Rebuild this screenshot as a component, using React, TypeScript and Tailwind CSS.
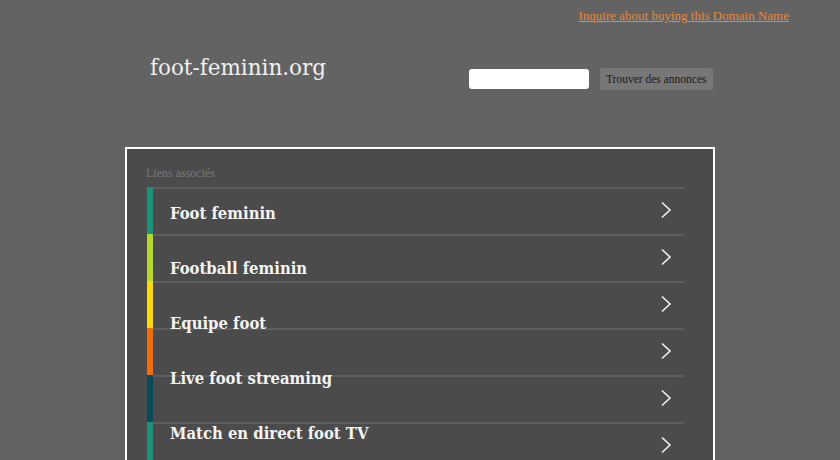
import React from 'react';

interface LinkRow {
  label: string;
  bar: string;
  pad: string;
}

const rows: LinkRow[] = [
  { label: 'Foot feminin', bar: 'bg-[#1a9479]', pad: 'pt-[13px]' },
  { label: 'Football feminin', bar: 'bg-[#b6d62a]', pad: 'pt-[21px]' },
  { label: 'Equipe foot', bar: 'bg-[#fbd90a]', pad: 'pt-[29px]' },
  { label: 'Live foot streaming', bar: 'bg-[#f26c0a]', pad: 'pt-[37px]' },
  { label: 'Match en direct foot TV', bar: 'bg-[#084a5a]', pad: 'pt-[45px]' },
  { label: '', bar: 'bg-[#1d9278]', pad: 'pt-[53px]' },
];

function Chevron() {
  return (
    <svg width="12" height="18" viewBox="0 0 12 18" fill="none" className="shrink-0">
      <path d="M2 1.5 L10 9 L2 16.5" stroke="#f2f2f2" strokeWidth="1.6" />
    </svg>
  );
}

export default function App() {
  return (
    <div
      className="w-[840px] h-[460px] overflow-hidden bg-[#636363] relative"
      style={{ fontFamily: '"DejaVu Serif", "Liberation Serif", serif' }}
    >
      {/* top link */}
      <div className="flex justify-end pr-[51px] pt-[8px] h-[40px]">
        <a
          href="#"
          className="text-[#e8883a] underline text-[13px] leading-[16px]"
          style={{ fontFamily: '"Liberation Serif", serif' }}
        >
          Inquire about buying this Domain Name
        </a>
      </div>

      {/* header */}
      <div className="flex items-start h-[107px]">
        <div className="pl-[150px] pt-[13px] text-[21.5px] leading-[30px] text-[#f0f0f0] w-[469px]">
          foot-feminin.org
        </div>
        <div className="flex items-center gap-[11px] pt-[28px]">
          <div className="w-[120px] h-[20px] bg-white rounded-[3px]" />
          <button
            className="h-[22px] px-[6px] bg-[#777777] rounded-[3px] text-[#1a1a1a] text-[11.5px] leading-[22px]"
            style={{ fontFamily: '"Liberation Serif", serif' }}
          >
            Trouver des annonces
          </button>
        </div>
      </div>

      {/* links box */}
      <div className="ml-[125px] w-[590px] h-[330px] border-2 border-b-0 border-white bg-[#4b4b4b]">
        <div
          className="pl-[19px] pt-[17px] h-[38px] text-[12px] leading-[14px] text-[#797979]"
          style={{ fontFamily: '"Liberation Serif", serif' }}
        >
          Liens associés
        </div>
        <div className="ml-[20px] w-[537px]">
          {rows.map((r, i) => (
            <div key={i} className="relative flex h-[47px] border-t-2 border-[#5d5d5d]">
              <div className={`w-[6px] -mt-[2px] h-[47px] ${r.bar}`} />
              <div className={`flex-1 pl-[17px] ${r.pad}`}>
                <span
                  className="relative z-10 block whitespace-nowrap text-[16.5px] leading-[24px] font-bold text-[#f4f4f4]"
                  style={{ fontFamily: '"DejaVu Serif Condensed", "DejaVu Serif", serif' }}
                >
                  {r.label}
                </span>
              </div>
              <div className="absolute right-[12px] top-[12px]">
                <Chevron />
              </div>
            </div>
          ))}
        </div>
      </div>
    </div>
  );
}
